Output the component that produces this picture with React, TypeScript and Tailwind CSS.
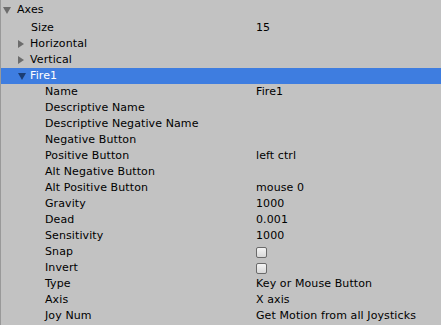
import React from "react";

const fields: { label: string; value?: string; check?: boolean }[] = [
  { label: "Name", value: "Fire1" },
  { label: "Descriptive Name" },
  { label: "Descriptive Negative Name" },
  { label: "Negative Button" },
  { label: "Positive Button", value: "left ctrl" },
  { label: "Alt Negative Button" },
  { label: "Alt Positive Button", value: "mouse 0" },
  { label: "Gravity", value: "1000" },
  { label: "Dead", value: "0.001" },
  { label: "Sensitivity", value: "1000" },
  { label: "Snap", check: true },
  { label: "Invert", check: true },
  { label: "Type", value: "Key or Mouse Button" },
  { label: "Axis", value: "X axis" },
  { label: "Joy Num", value: "Get Motion from all Joysticks" },
];

const Right = () => (
  <svg width="6" height="8" viewBox="0 0 6 8" className="shrink-0">
    <path d="M0 0 L6 4 L0 8 Z" fill="#6c6c6c" />
  </svg>
);

const Down = ({ color }: { color: string }) => (
  <svg width="8" height="7" viewBox="0 0 8 7" className="shrink-0">
    <path d="M0 0 L8 0 L4 7 Z" fill={color} />
  </svg>
);

const Checkbox = () => (
  <div className="w-[11px] h-[11px] rounded-[2px] border border-[#6a6a6a] bg-gradient-to-b from-[#f4f4f4] to-[#d8d8d8]" />
);

export default function App() {
  return (
    <div
      className="w-[441px] h-[325px] pt-[2px] bg-[#c2c2c2] border-l border-[#999999] text-[11px] tracking-[0.1px] text-black overflow-hidden"
      style={{ fontFamily: '"DejaVu Sans", Verdana, sans-serif' }}
    >
      <div className="h-4 flex items-center pl-[2px] gap-[6px]">
        <Down color="#6c6c6c" />
        <span>Axes</span>
      </div>
      <div className="h-4 mt-0.5 flex items-center">
        <span className="w-[255px] pl-[30px]">Size</span>
        <span>15</span>
      </div>
      <div className="h-4 flex items-center pl-[17px] gap-[6px]">
        <Right />
        <span>Horizontal</span>
      </div>
      <div className="h-4 flex items-center pl-[17px] gap-[6px]">
        <Right />
        <span>Vertical</span>
      </div>
      <div className="h-4 flex items-center pl-[17px] gap-[4px] bg-[#3e7de0] text-white">
        <Down color="#1b3d73" />
        <span>Fire1</span>
      </div>
      {fields.map((f) => (
        <div key={f.label} className="h-4 flex items-center">
          <span className="w-[255px] pl-[44px] shrink-0">{f.label}</span>
          {f.check ? <Checkbox /> : <span>{f.value}</span>}
        </div>
      ))}
    </div>
  );
}
